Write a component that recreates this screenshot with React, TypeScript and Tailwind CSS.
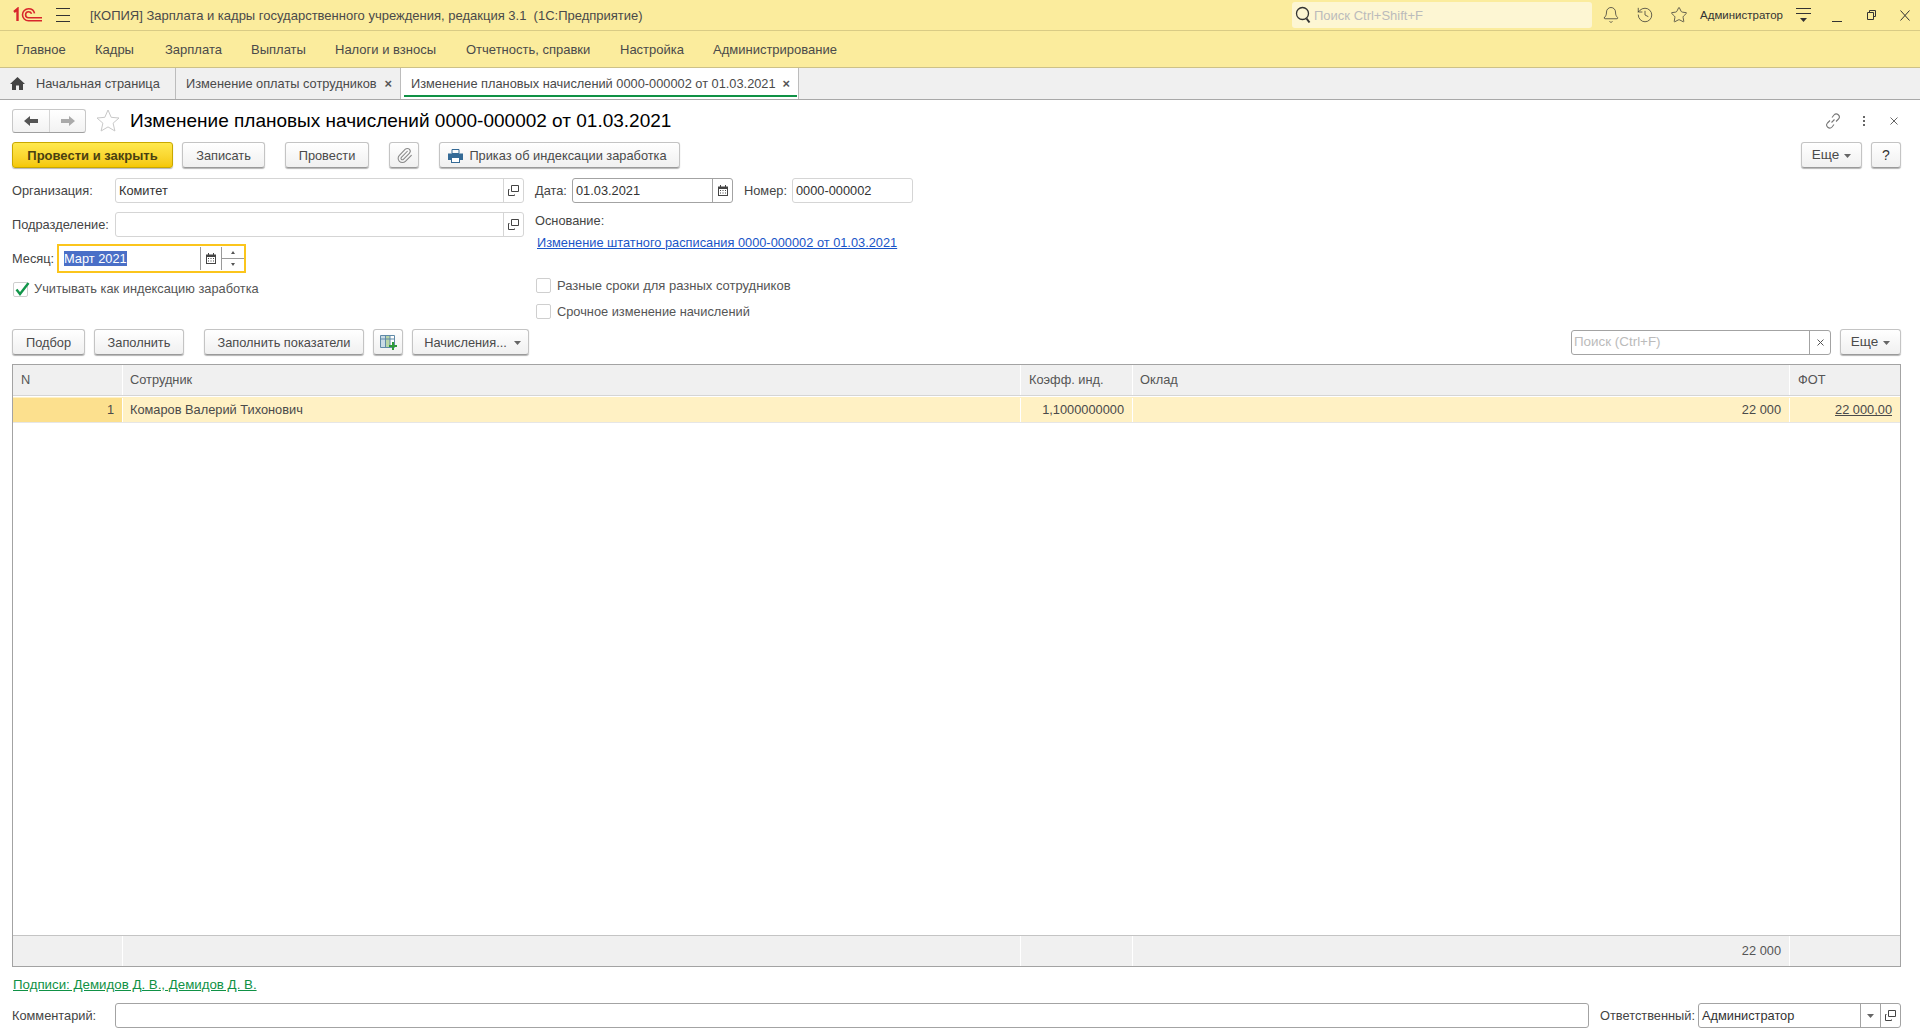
import type { ReactNode } from "react";
import { Bell, History, Paperclip, Star } from "lucide-react";

const Caret = () => (
  <svg width="7" height="4" viewBox="0 0 7 4" className="shrink-0">
    <path d="M0 0h7L3.500 4z" fill="#666" />
  </svg>
);

const OpenIcon = () => (
  <svg width="11" height="11" viewBox="0 0 11 11" fill="none" stroke="#444">
    <path d="M3.500 .5h7v6h-7z" />
    <path d="M1.500 4.500h-1v6h6v-1" />
  </svg>
);

const CalendarIcon = () => (
  <svg width="10" height="11" viewBox="0 0 10 11">
    <path d="M0 1.500h10V11H0z" fill="#444" />
    <path d="M2 0h1v2H2zM7 0h1v2H7z" fill="#444" />
    <path d="M1 4h8v6H1z" fill="#fff" />
    <path d="M2 5h1v1H2zM4.500 5h1v1h-1zM7 5h1v1H7zM2 7.500h1v1H2zM4.500 7.500h1v1h-1zM7 7.500h1v1H7z" fill="#444" />
  </svg>
);

const Logo = () => (
  <svg width="30" height="16" viewBox="0 0 30 16" fill="none" stroke="#d8262c" strokeWidth="1.600">
    <path d="M1 5l3.500-3v12" strokeWidth="2.400" />
    <path d="M29 13.800H15.500a6 6 0 1 1 0-12c3.200 0 5.500 2 6 4.500" />
    <path d="M29 10.700H15.600a3 3 0 1 1 0-6c1.500 0 2.500 .8 3 2" />
  </svg>
);

function Btn(props: { children: ReactNode; className?: string }) {
  return (
    <div
      className={`flex h-[26px] shrink-0 items-center justify-center gap-[5px] rounded-[3px] border border-[#c4c4c4] border-b-[#9a9a9a] bg-gradient-to-b from-white to-[#f0f0f0] pt-px text-[#4a4a4a] shadow-[0_1px_1px_#b5b5b5] ${props.className ?? ""}`}
    >
      {props.children}
    </div>
  );
}

function Field(props: { value?: string; className?: string; dark?: boolean; children?: ReactNode }) {
  return (
    <div
      className={`flex h-[25px] items-center rounded-[3px] border bg-white text-[#333] ${props.dark ? "border-[#a3a3a3]" : "border-[#d5d5d5]"} ${props.className ?? ""}`}
    >
      <span className="flex-1 truncate pl-[3px]">{props.value}</span>
      {props.children}
    </div>
  );
}

const FieldButton = ({ children, dark }: { children: ReactNode; dark?: boolean }) => (
  <div className={`flex h-full w-[20px] items-center justify-center border-l ${dark ? "border-[#a3a3a3]" : "border-[#d5d5d5]"}`}>
    {children}
  </div>
);

function Check(props: { label: string; checked?: boolean; wide?: boolean }) {
  return (
    <div className={`flex h-[16px] items-center gap-[6px] text-[#555] ${props.wide ? "text-[13px]" : ""}`}>
      <div className="relative h-[15px] w-[15px] rounded-[2px] border border-[#cfcfcf] bg-white">
        {props.checked && (
          <svg width="16" height="15" viewBox="0 0 16 15" className="absolute left-0 top-[-1px]" fill="none" stroke="#12964a" strokeWidth="2.400">
            <path d="M2.500 7.500l3.500 4.500L14.500 1" />
          </svg>
        )}
      </div>
      <span className={props.checked ? "" : "pt-px"}>{props.label}</span>
    </div>
  );
}

const menu = [
  ["Главное", "w-[79px]"],
  ["Кадры", "w-[70px]"],
  ["Зарплата", "w-[86px]"],
  ["Выплаты", "w-[84px]"],
  ["Налоги и взносы", "w-[131px]"],
  ["Отчетность, справки", "w-[154px]"],
  ["Настройка", "w-[93px]"],
  ["Администрирование", "w-[160px]"],
];

const cols = "grid grid-cols-[110px_898px_112px_657px_110px]";

export default function App() {
  return (
    <div className="flex h-[1036px] w-[1920px] flex-col overflow-hidden bg-white font-['Liberation_Sans',Arial,sans-serif] text-[12.800px] text-[#444]">
      {/* title bar */}
      <div className="flex h-[31px] shrink-0 items-center border-b border-[#d9cb85] bg-[#fbec9d] text-[13px]">
        <div className="ml-[13px] w-[43px]">
          <Logo />
        </div>
        <div className="flex h-[14px] w-[34px] flex-col justify-between">
          <div className="h-px w-[14px] bg-[#333]" />
          <div className="h-px w-[14px] bg-[#333]" />
          <div className="h-px w-[14px] bg-[#333]" />
        </div>
        <span className="pt-px text-[#4a4a4a]">[КОПИЯ] Зарплата и кадры государственного учреждения, редакция 3.1&nbsp; (1С:Предприятие)</span>
        <div className="ml-auto flex h-[26px] w-[300px] items-center rounded-[3px] bg-[#fdf6d3] pl-[3px] text-[#bbb]">
          <svg width="16" height="18" viewBox="0 0 16 18" fill="none" stroke="#333" strokeWidth="1.300" className="shrink-0">
            <circle cx="7.500" cy="7.500" r="6" />
            <path d="M11.500 12.500l3 4" strokeWidth="2" />
          </svg>
          <span className="ml-[3px] pt-px">Поиск Ctrl+Shift+F</span>
        </div>
        <div className="ml-[10px] flex w-[34px]">
          <Bell size={18} strokeWidth={1} color="#333" />
        </div>
        <div className="flex w-[34px]">
          <History size={18} strokeWidth={1} color="#333" />
        </div>
        <div className="flex w-[30px]">
          <Star size={18} strokeWidth={1} color="#333" />
        </div>
        <span className="w-[96px] pt-px text-[11.500px] text-[#333]">Администратор</span>
        <div className="flex h-[14px] w-[36px] flex-col items-start">
          <div className="h-px w-[15px] bg-[#333]" />
          <div className="mt-[4px] h-px w-[15px] bg-[#333]" />
          <svg width="7" height="4" viewBox="0 0 7 4" className="ml-[4px] mt-[4px]">
            <path d="M0 0h7L3.500 4z" fill="#333" />
          </svg>
        </div>
        <div className="flex h-[14px] w-[35px] items-end">
          <div className="h-px w-[10px] bg-[#333]" />
        </div>
        <div className="w-[33px]">
          <svg width="9" height="10" viewBox="0 0 9 10" fill="none" stroke="#333">
            <path d="M2.500 2.500v-2h6v6h-2" />
            <path d="M.5 2.500h6v7h-6z" />
          </svg>
        </div>
        <svg width="10" height="11" viewBox="0 0 10 11" fill="none" stroke="#333" className="mr-[10px]">
          <path d="M.5 .5l9 10M9.500 .5l-9 10" />
        </svg>
      </div>

      {/* section menu */}
      <div className="flex h-[37px] shrink-0 items-center border-b border-[#cdc187] bg-[#fbec9d] pl-[16px] pt-px text-[13px] text-[#4a4a4a]">
        {menu.map(([label, width]) => (
          <span key={label} className={width}>
            {label}
          </span>
        ))}
      </div>

      {/* open windows */}
      <div className="flex h-[32px] shrink-0 border-b border-[#a8a8a8] bg-[#f0f0f0] text-[#4a4a4a]">
        <div className="flex w-[176px] items-center border-r border-[#bcbcbc] pl-[10px]">
          <svg width="15" height="13" viewBox="0 0 15 13" fill="#444">
            <path d="M7.500 0L15 7h-2v6H9V8.500H6V13H2V7H0z" />
          </svg>
          <span className="ml-[11px]">Начальная страница</span>
        </div>
        <div className="flex w-[225px] items-center border-r border-[#bcbcbc] pl-[10px]">
          <span>Изменение оплаты сотрудников</span>
          <span className="ml-[8px] font-bold text-[#555]">×</span>
        </div>
        <div className="relative flex w-[398px] items-center border-r border-[#bcbcbc] bg-white pl-[10px]">
          <span>Изменение плановых начислений 0000-000002 от 01.03.2021</span>
          <span className="ml-[7px] font-bold text-[#555]">×</span>
          <div className="absolute bottom-[2px] left-[3px] right-[1px] h-[2px] bg-[#0f9145]" />
        </div>
      </div>

      {/* form */}
      <div className="flex min-h-0 flex-1 flex-col px-[12px] pr-[19px]">
        <div className="mt-[8px] flex h-[25px] shrink-0 items-center">
          <div className="flex h-[24px] w-[74px] rounded-[3px] border border-[#c8c8c8] border-b-[#a0a0a0] bg-gradient-to-b from-white to-[#f2f2f2]">
            <div className="flex w-[37px] items-center justify-center border-r border-[#d5d5d5]">
              <svg width="14" height="10" viewBox="0 0 14 10" fill="#555">
                <path d="M0 5l6-5v3h8v4H6v3z" />
              </svg>
            </div>
            <div className="flex flex-1 items-center justify-center">
              <svg width="14" height="10" viewBox="0 0 14 10" fill="#aaa">
                <path d="M14 5L8 0v3H0v4h8v3z" />
              </svg>
            </div>
          </div>
          <svg width="24" height="23" viewBox="0 0 24 23" className="ml-[10px]" fill="none" stroke="#c8c8c8">
            <path d="M12 1l3.200 7.300 7.800 .7-5.900 5.200 1.800 7.800L12 17.900 5.100 22l1.800-7.800L1 9l7.800-.7z" />
          </svg>
          <span className="ml-[10px] pt-[2px] text-[19px] text-black">Изменение плановых начислений 0000-000002 от 01.03.2021</span>
          <div className="ml-auto flex items-center">
            <svg width="16" height="16" viewBox="0 0 16 16" fill="none" stroke="#777" strokeWidth="1.100">
              <path d="M6.500 9.500l3-3M7 4.500l2-2.500a3 3 0 0 1 4.500 4L11 8.500M9 11.500L7 14a3 3 0 0 1-4.500-4L5 7.500" />
            </svg>
            <div className="ml-[22px] flex flex-col gap-[2px]">
              <div className="h-[2px] w-[2px] bg-[#666]" />
              <div className="h-[2px] w-[2px] bg-[#666]" />
              <div className="h-[2px] w-[2px] bg-[#666]" />
            </div>
            <svg width="8" height="8" viewBox="0 0 8 8" className="ml-[25px] mr-[3px]" fill="none" stroke="#666">
              <path d="M.5 .5l7 7M7.500 .5l-7 7" />
            </svg>
          </div>
        </div>

        <div className="mt-[9px] flex shrink-0 items-center">
          <div className="flex h-[26px] w-[161px] items-center justify-center rounded-[3px] border border-[#c9a800] bg-gradient-to-b from-[#ffe94d] to-[#f5c800] pt-px text-[13px] font-bold text-[#4a4010] shadow-[0_1px_1px_#b5b5b5]">
            Провести и закрыть
          </div>
          <Btn className="ml-[9px] w-[83px]">Записать</Btn>
          <Btn className="ml-[20px] w-[84px]">Провести</Btn>
          <Btn className="ml-[20px] w-[30px]">
            <Paperclip size={17} strokeWidth={1.500} color="#888" />
          </Btn>
          <Btn className="ml-[20px] w-[241px] gap-[6px] pr-[4px]">
            <svg width="15" height="14" viewBox="0 0 15 14">
              <path d="M4 .5h7v4H4z" fill="none" stroke="#346a96" />
              <path d="M0 4.500h15V11h-3v3H3v-3H0z" fill="#346a96" />
              <path d="M4 9h7v4H4z" fill="#fff" />
            </svg>
            <span>Приказ об индексации заработка</span>
          </Btn>
          <Btn className="ml-auto w-[61px] text-[13.500px]">
            <span>Еще</span>
            <Caret />
          </Btn>
          <Btn className="ml-[9px] w-[30px] text-[14px] text-[#333]">?</Btn>
        </div>

        <div className="mt-[10px] flex shrink-0">
          <div className="w-[523px]">
            <div className="flex h-[25px] items-center">
              <span className="w-[103px]">Организация:</span>
              <Field value="Комитет" className="w-[409px]">
                <FieldButton>
                  <OpenIcon />
                </FieldButton>
              </Field>
            </div>
            <div className="mt-[9px] flex h-[25px] items-center">
              <span className="w-[103px]">Подразделение:</span>
              <Field className="w-[409px]">
                <FieldButton>
                  <OpenIcon />
                </FieldButton>
              </Field>
            </div>
            <div className="mb-[8px] mt-[7px] flex h-[29px] items-center">
              <span className="w-[45px]">Месяц:</span>
              <div className="flex h-[29px] w-[189px] items-center border-2 border-[#fbc51c] bg-white">
                <div className="flex-1 pl-[5px]">
                  <span className="bg-[#4a6fc7] text-white">Март 2021</span>
                </div>
                <div className="flex h-[23px] w-[21px] items-center justify-center border-l border-[#9a9a9a]">
                  <CalendarIcon />
                </div>
                <div className="flex h-[23px] w-[23px] flex-col items-center justify-center border-l border-[#9a9a9a]">
                  <div className="flex h-[12px] w-full items-center justify-center border-b border-[#9a9a9a] text-[0px]">
                    <svg width="4" height="3" viewBox="0 0 4 3">
                      <path d="M2 0l2 3H0z" fill="#555" />
                    </svg>
                  </div>
                  <div className="flex h-[11px] w-full items-center justify-center">
                    <svg width="4" height="3" viewBox="0 0 4 3">
                      <path d="M0 0h4L2 3z" fill="#555" />
                    </svg>
                  </div>
                </div>
              </div>
            </div>
            <div className="mt-[7px] pl-[1px]">
              <Check label="Учитывать как индексацию заработка" checked />
            </div>
          </div>
          <div>
            <div className="flex h-[25px] items-center">
              <span className="w-[37px]">Дата:</span>
              <Field value="01.03.2021" dark className="w-[161px]">
                <FieldButton dark>
                  <CalendarIcon />
                </FieldButton>
              </Field>
              <span className="ml-[11px] w-[48px]">Номер:</span>
              <Field value="0000-000002" className="w-[121px]" />
            </div>
            <div className="mt-[11px] h-[14px] leading-[14px]">Основание:</div>
            <div className="ml-[2px] mt-[8px] h-[14px] leading-[14px] text-[#1a55c8] underline">Изменение штатного расписания 0000-000002 от 01.03.2021</div>
            <div className="mt-[27px] pl-[1px]">
              <Check label="Разные сроки для разных сотрудников" wide />
            </div>
            <div className="mt-[10px] pl-[1px]">
              <Check label="Срочное изменение начислений" />
            </div>
          </div>
        </div>

        <div className="mt-[10px] flex shrink-0 items-center">
          <Btn className="w-[73px]">Подбор</Btn>
          <Btn className="ml-[9px] w-[90px]">Заполнить</Btn>
          <Btn className="ml-[20px] w-[160px]">Заполнить показатели</Btn>
          <Btn className="ml-[9px] w-[30px]">
            <svg width="17" height="15" viewBox="0 0 17 15">
              <path d="M.5 .5h14v12H.5z" fill="#fff" stroke="#5f8aa8" />
              <path d="M1 1h4.500v11H1z" fill="#c9dbe6" />
              <path d="M6 1h4v11H6z" fill="#b9d6a8" />
              <path d="M5.500 1v11M10 1v11M1 4h13" stroke="#5f8aa8" />
              <path d="M9 10h3V7h2v3h3v2h-3v3h-2v-3H9z" fill="#2f9a3a" />
            </svg>
          </Btn>
          <Btn className="ml-[9px] w-[117px] gap-[7px]">
            <span className="ml-[4px]">Начисления...</span>
            <Caret />
          </Btn>
          <div className="ml-auto flex h-[25px] w-[260px] items-center rounded-[3px] border border-[#a3a3a3] bg-white text-[#bbb]">
            <span className="flex-1 pl-[2px] pt-px text-[13.400px]">Поиск (Ctrl+F)</span>
            <div className="flex h-full w-[21px] items-center justify-center border-l border-[#a3a3a3]">
              <svg width="7" height="7" viewBox="0 0 7 7" fill="none" stroke="#555">
                <path d="M.5 .5l6 6M6.500 .5l-6 6" />
              </svg>
            </div>
          </div>
          <Btn className="ml-[9px] w-[61px] text-[13.500px]">
            <span>Еще</span>
            <Caret />
          </Btn>
        </div>

        {/* table */}
        <div className="mt-[9px] flex min-h-0 flex-1 flex-col border border-[#a3a3a3]">
          <div className={`${cols} h-[31px] shrink-0 border-b border-[#d5d5d5] bg-[#f0f0f0] text-[#555]`}>
            <div className="flex items-center border-r border-white pl-[8px]">N</div>
            <div className="flex items-center border-r border-white pl-[7px]">Сотрудник</div>
            <div className="flex items-center border-r border-white pl-[8px]">Коэфф. инд.</div>
            <div className="flex items-center border-r border-white pl-[7px]">Оклад</div>
            <div className="flex items-center pl-[8px]">ФОТ</div>
          </div>
          <div className={`${cols} mt-px h-[26px] shrink-0 border-b border-[#e6e6e6] bg-[#fff1c4] pt-px text-[#4a4a4a]`}>
            <div className="flex items-center justify-end border-r border-white bg-[#fce08e] pr-[8px]">1</div>
            <div className="flex items-center border-r border-white pl-[7px]">Комаров Валерий Тихонович</div>
            <div className="flex items-center justify-end border-r border-white pr-[8px]">1,1000000000</div>
            <div className="flex items-center justify-end border-r border-white pr-[8px]">22 000</div>
            <div className="flex items-center justify-end pr-[8px] underline">22 000,00</div>
          </div>
          <div className="flex-1" />
          <div className={`${cols} h-[31px] shrink-0 border-t border-[#c4c4c4] bg-[#f0f0f0] text-[#555]`}>
            <div className="border-r border-white" />
            <div className="border-r border-white" />
            <div className="border-r border-white" />
            <div className="flex items-center justify-end border-r border-white pr-[8px]">22 000</div>
            <div />
          </div>
        </div>

        <div className="mt-[11px] h-[14px] shrink-0 pl-px text-[13.300px] leading-[14px] text-[#0f9145] underline">Подписи: Демидов Д. В., Демидов Д. В.</div>
        <div className="mb-[8px] mt-[11px] flex h-[25px] shrink-0 items-center">
          <span className="w-[103px]">Комментарий:</span>
          <Field dark className="w-[1474px]" />
          <span className="ml-[11px] w-[98px]">Ответственный:</span>
          <Field value="Администратор" dark className="w-[203px]">
            <FieldButton dark>
              <Caret />
            </FieldButton>
            <FieldButton dark>
              <OpenIcon />
            </FieldButton>
          </Field>
        </div>
      </div>
    </div>
  );
}
